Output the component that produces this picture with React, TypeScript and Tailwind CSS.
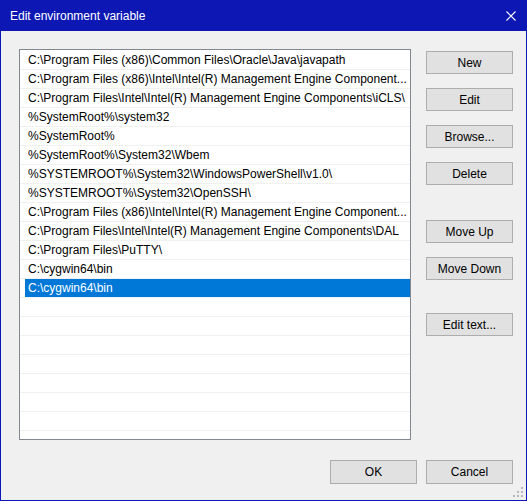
import React from "react";

const paths = [
  "C:\\Program Files (x86)\\Common Files\\Oracle\\Java\\javapath",
  "C:\\Program Files (x86)\\Intel\\Intel(R) Management Engine Component...",
  "C:\\Program Files\\Intel\\Intel(R) Management Engine Components\\iCLS\\",
  "%SystemRoot%\\system32",
  "%SystemRoot%",
  "%SystemRoot%\\System32\\Wbem",
  "%SYSTEMROOT%\\System32\\WindowsPowerShell\\v1.0\\",
  "%SYSTEMROOT%\\System32\\OpenSSH\\",
  "C:\\Program Files (x86)\\Intel\\Intel(R) Management Engine Component...",
  "C:\\Program Files\\Intel\\Intel(R) Management Engine Components\\DAL",
  "C:\\Program Files\\PuTTY\\",
  "C:\\cygwin64\\bin",
  "C:\\cygwin64\\bin",
];

const SELECTED = 12;
const TOTAL_ROWS = 21;

function WinButton({ label, className = "" }: { label: string; className?: string }) {
  return (
    <button
      className={`h-[23px] w-[87px] border border-[#adadad] bg-[#e1e1e1] text-[12px] leading-none text-black ${className}`}
    >
      {label}
    </button>
  );
}

export default function App() {
  const rows = Array.from({ length: TOTAL_ROWS }, (_, i) => paths[i] ?? "");

  return (
    <div
      className="relative flex h-[501px] w-[527px] flex-col border border-[#0c17b4] bg-[#f0f0f0] text-black"
      style={{ fontFamily: '"Liberation Sans", Arial, sans-serif' }}
    >
      {/* title bar */}
      <div className="flex h-[30px] shrink-0 items-center justify-between bg-[#0c17b4] pl-[9px] pr-[9px] text-[12px] text-white">
        <span>Edit environment variable</span>
        <svg width="10" height="10" viewBox="0 0 10 10" className="mr-[1px]">
          <path d="M0.5 0.5 L9.5 9.5 M9.5 0.5 L0.5 9.5" stroke="#fff" strokeWidth="1.1" />
        </svg>
      </div>

      <div className="flex pl-[18px] pt-[18px]">
        {/* list */}
        <div className="h-[391px] w-[392px] overflow-hidden border border-[#828790] bg-white pt-[1px]">
          {rows.map((p, i) => (
            <div key={i} className="h-[19px] border-b border-[#f0f0f0]">
              <div
                className={`ml-[5px] flex h-[18px] items-center truncate whitespace-pre pl-[3px] text-[12px] ${
                  i === SELECTED ? "bg-[#0078d7] text-white" : "text-black"
                }`}
              >
                {p}
              </div>
            </div>
          ))}
        </div>

        {/* side buttons */}
        <div className="ml-[15px] flex flex-col pt-[2px]">
          <WinButton label="New" />
          <WinButton label="Edit" className="mt-[14px]" />
          <WinButton label="Browse..." className="mt-[14px]" />
          <WinButton label="Delete" className="mt-[14px]" />
          <WinButton label="Move Up" className="mt-[35px]" />
          <WinButton label="Move Down" className="mt-[14px]" />
          <WinButton label="Edit text..." className="mt-[33px]" />
        </div>
      </div>

      {/* footer */}
      <div className="mt-[20px] flex justify-end gap-[9px] pr-[13px]">
        <WinButton label="OK" className="h-[24px]" />
        <WinButton label="Cancel" className="h-[24px]" />
      </div>

      {/* resize grip */}
      <svg width="11" height="11" viewBox="0 0 11 11" className="absolute bottom-[2px] right-[2px]">
        <g fill="#b8b8b8">
          <rect x="8" y="0" width="2" height="2" />
          <rect x="4" y="4" width="2" height="2" />
          <rect x="8" y="4" width="2" height="2" />
          <rect x="0" y="8" width="2" height="2" />
          <rect x="4" y="8" width="2" height="2" />
          <rect x="8" y="8" width="2" height="2" />
        </g>
      </svg>
    </div>
  );
}
